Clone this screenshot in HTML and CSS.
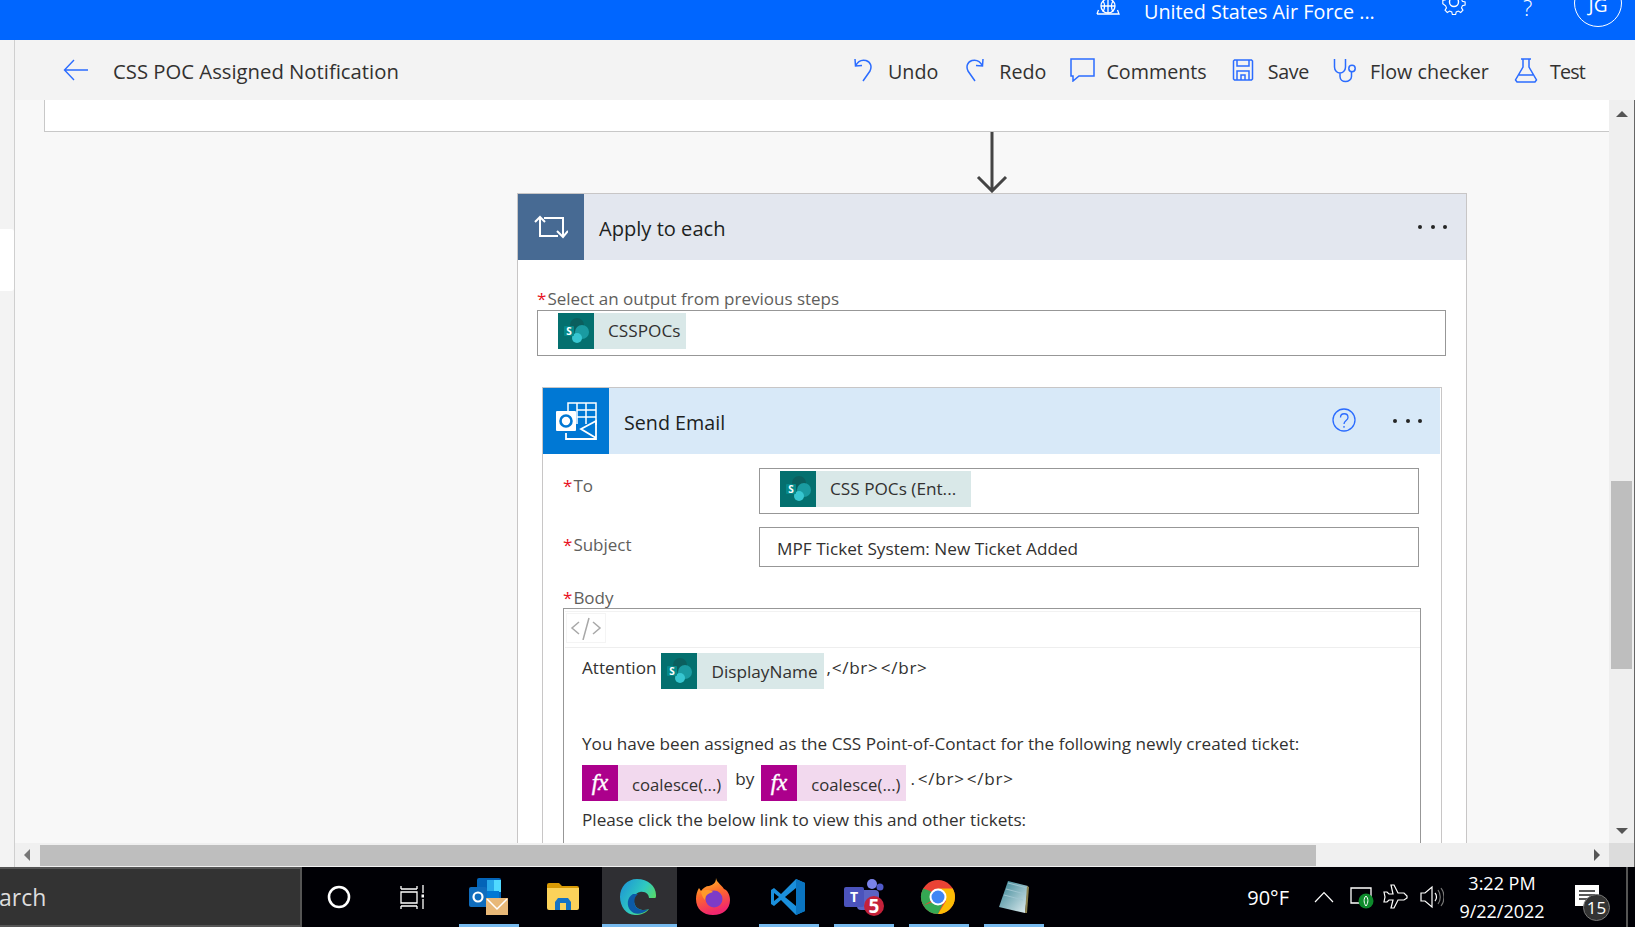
FILE: index.html
```html
<!DOCTYPE html>
<html lang="en">
<head>
<meta charset="utf-8">
<title>CSS POC Assigned Notification</title>
<link rel="stylesheet" href="styles.css">
</head>
<body>
<div class="page">
  <header class="topbar">
    <div class="topbar-inner">
      <svg class="env-ic" width="24" height="24" viewBox="0 0 24 24" fill="none" stroke="#fff" stroke-width="1.3"><circle cx="12" cy="6" r="7"/><path d="M5 6h14M12 -1v14M7 1c2 3 2 7 0 11M17 1c-2 3-2 7 0 11M1 14h22l-1.500-4M1 14l1.500-4"/></svg>
      <span class="env-name">United States Air Force ...</span>
      <svg class="gear" width="26" height="26" viewBox="0 0 26 26" fill="none" stroke="#fff" stroke-width="1.400"><circle cx="13" cy="13" r="4.500"/><path d="M11 1h4l.8 3.400 2.600 1.100 3-1.800 2.800 2.800-1.800 3 1.100 2.600 3.400.8v4l-3.400.8-1.100 2.600 1.800 3-2.800 2.800-3-1.800-2.600 1.100-.8 3.400h-4l-.8-3.400-2.600-1.100-3 1.800-2.800-2.800 1.800-3-1.100-2.600L-1 15v-4l3.400-.8 1.100-2.600-1.800-3 2.800-2.800 3 1.800 2.600-1.100z" transform="translate(2.600 2.600) scale(.8)"/></svg>
      <span class="help">?</span>
      <span class="avatar">JG</span>
    </div>
  </header>

  <div class="workspace">
    <aside class="rail"><div class="rail-tab"></div></aside>
    <main class="main">
      <nav class="toolbar">
        <svg class="back" width="26" height="24" viewBox="0 0 26 24" fill="none" stroke="#2b6cff" stroke-width="1.400"><path d="M25 12H2M11 2 1.500 12 11 22"/></svg>
        <h1 class="flow-title">CSS POC Assigned Notification</h1>
        <div class="actions">
          <button class="action undo"><svg width="20" height="24" viewBox="0 0 20 24" fill="none" stroke="#2b6cff" stroke-width="1.500"><path d="M2 1l.5 7 6.500-.5M2.500 8C5 3 9 1.500 13 2.500c5 1.500 6 6.500 4 10.500L10 23"/></svg><span>Undo</span></button>
          <button class="action redo"><svg width="20" height="24" viewBox="0 0 20 24" fill="none" stroke="#2b6cff" stroke-width="1.500"><path d="M18 1l-.5 7-6.500-.5M17.500 8C15 3 11 1.500 7 2.500 2 4 1 9 3 13l7 10"/></svg><span>Redo</span></button>
          <button class="action comments"><svg width="25" height="24" viewBox="0 0 25 24" fill="none" stroke="#2b6cff" stroke-width="1.500"><path d="M1 1h23v17H9l-6 5v-5H1z"/></svg><span>Comments</span></button>
          <button class="action save"><svg width="22" height="24" viewBox="0 0 22 24" fill="none" stroke="#2b6cff" stroke-width="1.500"><path d="M2.500 2h17l1 1v18l-1 1h-17l-1-1V3zM5 2v6h12V2M5 22v-9h12v9M9 22v-5h4v5"/></svg><span>Save</span></button>
          <button class="action checker"><svg width="24" height="25" viewBox="0 0 24 25" fill="none" stroke="#2b6cff" stroke-width="1.500"><path d="M1.500 1v8c0 4 3 6 5.500 6s5.500-2 5.500-6V1M7 15v3.500c0 3 2.500 5 5.500 5s6-2 6-5V14"/><circle cx="19" cy="10.500" r="3.200"/></svg><span>Flow checker</span></button>
          <button class="action test"><svg width="24" height="25" viewBox="0 0 24 25" fill="none" stroke="#2b6cff" stroke-width="1.500"><path d="M7 1h10M9 1v8L1.500 22l1.500 2h18l1.500-2L15 9V1M5 17h14"/></svg><span>Test</span></button>
        </div>
      </nav>

      <div class="content">
        <section class="canvas">
          <div class="prev-panel"></div>
          <div class="flow-col">
            <svg class="connector" width="32" height="61" viewBox="0 0 32 61" fill="none" stroke="#444" stroke-width="3"><path d="M16 0v58M2 45l14 14 14-14"/></svg>
            <article class="card apply">
              <div class="card-head apply-head">
                <div class="card-icon apply-icon">
                  <svg width="34" height="24" viewBox="0 0 34 24" fill="none" stroke="#fff" stroke-width="2"><path d="M1 7l5-5 5 5M6 2v19h18M10 3h19v18M23 16l6 6 5-6"/></svg>
                </div>
                <span class="card-title">Apply to each</span>
                <span class="dots"><i></i><i></i><i></i></span>
              </div>
              <div class="apply-body">
                <label class="lbl"><b>*</b>Select an output from previous steps</label>
                <div class="inp inp-output">
                  <span class="token tok-sp"><svg class="tok-ic" viewBox="0 0 36 36"><rect width="36" height="36" fill="#04706f"/><circle cx="19" cy="12" r="7" fill="#0b5f5e"/><circle cx="24" cy="19" r="7" fill="#1a9ba1"/><circle cx="19" cy="25" r="5" fill="#37c6d0"/><rect x="6" y="13" width="10" height="10" rx="1" fill="#058a8a"/><text x="11" y="22" class="sp-s">S</text></svg><span class="tok-t t1">CSSPOCs</span></span>
                </div>

                <article class="card send">
                  <div class="card-head send-head">
                    <div class="card-icon send-icon">
                      <svg width="42" height="38" viewBox="0 0 42 38" fill="none" stroke="#fff" stroke-width="1.500"><path d="M13 9V1h28v22M22 1v21M31 1v21M22 8h19M22 15h19"/><rect x="1" y="9" width="20" height="20" rx="1" fill="#fff" stroke="none"/><circle cx="11" cy="19" r="5.500" stroke="#0078d4" stroke-width="2.600"/><path d="M11 31v6h30V19L26 27l15 9" stroke-width="1.800"/></svg>
                    </div>
                    <span class="card-title send-title">Send Email</span>
                    <svg class="q" width="24" height="24" viewBox="0 0 24 24" fill="none" stroke="#2b6cff" stroke-width="1.300"><circle cx="12" cy="12" r="11"/><path d="M8.500 9.500c0-5 7.500-5 7.500 0 0 3-4 3-4 6.500M12 18v1.800"/></svg>
                    <span class="dots"><i></i><i></i><i></i></span>
                  </div>
                  <div class="send-body">
                    <div class="field f-to">
                      <label class="lbl lbl-side"><b>*</b>To</label>
                      <div class="inp inp-to">
                        <span class="token tok-sp"><svg class="tok-ic" viewBox="0 0 36 36"><rect width="36" height="36" fill="#04706f"/><circle cx="19" cy="12" r="7" fill="#0b5f5e"/><circle cx="24" cy="19" r="7" fill="#1a9ba1"/><circle cx="19" cy="25" r="5" fill="#37c6d0"/><rect x="6" y="13" width="10" height="10" rx="1" fill="#058a8a"/><text x="11" y="22" class="sp-s">S</text></svg><span class="tok-t t2">CSS POCs (Ent...</span></span>
                      </div>
                    </div>
                    <div class="field f-subject">
                      <label class="lbl lbl-side"><b>*</b>Subject</label>
                      <div class="inp inp-subject">MPF Ticket System: New Ticket Added</div>
                    </div>
                    <label class="lbl lbl-body"><b>*</b>Body</label>
                    <div class="editor">
                      <div class="editor-bar"><span class="code-btn"><svg width="32" height="24" viewBox="0 0 32 24" fill="none" stroke="#a8a8a8" stroke-width="1.500"><path d="M9 6 2 12l7 6M23 6l7 6-7 6M19 2l-6 22"/></svg></span></div>
                      <div class="editor-text">
                        <div class="line l-attn"><span>Attention</span><span class="token tok-sp tok-dn"><svg class="tok-ic" viewBox="0 0 36 36"><rect width="36" height="36" fill="#04706f"/><circle cx="19" cy="12" r="7" fill="#0b5f5e"/><circle cx="24" cy="19" r="7" fill="#1a9ba1"/><circle cx="19" cy="25" r="5" fill="#37c6d0"/><rect x="6" y="13" width="10" height="10" rx="1" fill="#058a8a"/><text x="11" y="22" class="sp-s">S</text></svg><span class="tok-t t3">DisplayName</span></span><span class="after">,&lt;/br&gt; &lt;/br&gt;</span></div>
                        <div class="line l-you">You have been assigned as the CSS Point-of-Contact for the following newly created ticket:</div>
                        <div class="line l-tok"><span class="token tok-fx"><svg class="tok-ic" viewBox="0 0 36 36"><rect width="36" height="36" fill="#ac008c"/><text x="18" y="25" class="fx-t">fx</text></svg><span class="tok-t t4">coalesce(...)</span></span><span class="by">by</span><span class="token tok-fx"><svg class="tok-ic" viewBox="0 0 36 36"><rect width="36" height="36" fill="#ac008c"/><text x="18" y="25" class="fx-t">fx</text></svg><span class="tok-t t4">coalesce(...)</span></span><span class="after after2">. &lt;/br&gt; &lt;/br&gt;</span></div>
                        <div class="line l-please">Please click the below link to view this and other tickets:</div>
                      </div>
                    </div>
                  </div>
                </article>
              </div>
            </article>
          </div>
        </section>
        <div class="vscroll">
          <span class="arrow-up"></span>
          <div class="v-track"><div class="v-thumb"></div></div>
          <span class="arrow-down"></span>
        </div>
      </div>

      <div class="hscroll">
        <span class="h-btn"><span class="arrow-left"></span></span>
        <div class="h-thumb"></div>
        <div class="h-rest"><span class="arrow-right"></span></div>
        <div class="corner"></div>
      </div>
    </main>
  </div>

  <footer class="taskbar">
    <div class="search"><span class="search-t">arch</span></div>
    <div class="tb-item cortana"><svg width="24" height="24" viewBox="0 0 24 24" fill="none" stroke="#fff" stroke-width="2.600"><circle cx="12" cy="12" r="10"/></svg></div>
    <div class="tb-item task-view"><svg width="26" height="24" viewBox="0 0 26 24" fill="none" stroke="#fff" stroke-width="1.300"><path d="M3 4V1M19 4V1M3 4h16M3 7h16v11H3zM3 21h16M3 21v3M19 21v3M25 0v8M25 14v10"/><rect x="23.500" y="9.500" width="3" height="3" fill="#fff" stroke="none"/></svg></div>
    <div class="tb-item running">
      <svg width="40" height="40" viewBox="0 0 40 40"><rect x="9" y="1" width="24" height="28" rx="2" fill="#0364b8"/><rect x="19" y="3" width="14" height="12" fill="#28a8ea"/><rect x="26" y="3" width="7" height="12" fill="#50d9ff"/><rect x="9" y="14" width="22" height="16" fill="#0078d4"/><rect x="1" y="10" width="18" height="20" rx="2" fill="#0f6cbd"/><circle cx="10" cy="20" r="4.500" fill="none" stroke="#fff" stroke-width="2.200"/><rect x="18" y="21" width="22" height="17" fill="#e8b878"/><path d="M19 22l10 10 10-10" fill="none" stroke="#fff" stroke-width="1.500"/></svg>
    </div>
    <div class="tb-item">
      <svg width="34" height="30" viewBox="0 0 34 30"><path d="M1 3q0-2 2-2h10l3 3h15q2 0 2 2v5H1z" fill="#d99a05"/><path d="M1 6h32v20q0 2-2 2H3q-2 0-2-2z" fill="#fbd25a"/><path d="M9 28v-8l3-4h10l3 4v8h-5v-7h-6v7z" fill="#1473c5"/></svg>
    </div>
    <div class="tb-item active">
      <svg width="38" height="38" viewBox="0 0 38 38"><defs><linearGradient id="eg" x1="0" y1="0" x2="1" y2=".6"><stop offset="0" stop-color="#1b8fd8"/><stop offset=".6" stop-color="#2fc9c0"/><stop offset="1" stop-color="#5fdc5a"/></linearGradient></defs><path d="M18 1C8 1 1 9 1 19c0 9 6 18 15 18 6 0 11-2 14-6-5 2-12 1-14-4-3-6 0-12 5-13 6-1 9 3 9 6h6c1 0 1-2 1-3C37 8 29 1 18 1z" fill="url(#eg)"/><path d="M14 16c-6 3-7 12-2 17 3 3 9 5 18-2-5 2-12 1-14-4-1-4-1-8 3-11z" fill="#0c5aa8"/></svg>
    </div>
    <div class="tb-item">
      <svg width="36" height="38" viewBox="0 0 36 38"><defs><linearGradient id="ff" x1="0" y1="0" x2=".3" y2="1"><stop offset="0" stop-color="#ffcb2b"/><stop offset=".5" stop-color="#ff6a2b"/><stop offset="1" stop-color="#f0266e"/></linearGradient></defs><path d="M21 0c1 5 5 6 8 11 3 1 6 5 6 11 0 9-7 15-17 15S1 31 1 21c0-4 1-8 3-11l2 3c2-3 5-5 8-5 4-1 7-3 7-8z" fill="url(#ff)"/><circle cx="19" cy="21" r="8.500" fill="#7d3bc7"/><path d="M6 13c3-1 9-2 12 1-4 1-8 3-8 8-2-2-4-6-4-9z" fill="#ff9a2b"/></svg>
    </div>
    <div class="tb-item running">
      <svg width="36" height="38" viewBox="0 0 36 38"><path d="M26 1l9 4v28l-9 4L11 22l-7 6-3-2V12l3-2 7 6z" fill="#1a8fdc"/><path d="M26 1l9 4v28l-9 4z" fill="#0a74c0"/><path d="M26 10L15 19l11 9z" fill="#000"/><path d="M4 15l5 4-5 4z" fill="#000"/></svg>
    </div>
    <div class="tb-item running teams">
      <svg width="42" height="40" viewBox="0 0 42 40"><circle cx="29" cy="7" r="5" fill="#7b83eb"/><circle cx="37" cy="10" r="3.500" fill="#5059c9"/><rect x="14" y="13" width="22" height="20" rx="4" fill="#5b63c4"/><rect x="1" y="10" width="20" height="20" rx="2" fill="#4b53bc"/><text x="11" y="25" class="t-t">T</text><circle cx="31" cy="29" r="10" fill="#c4213a"/><text x="31" y="36" class="t-5">5</text></svg>
    </div>
    <div class="tb-item running">
      <svg width="36" height="36" viewBox="0 0 36 36"><circle cx="18" cy="18" r="17" fill="#ea4335"/><path d="M18 18L3.300 26.500A17 17 0 0 1 3.300 9.500L10 12z" fill="#34a853"/><path d="M3.300 26.500A17 17 0 0 0 18 35L26 18z" fill="#34a853"/><path d="M18 9.500h14.700A17 17 0 0 1 18 35L26 22z" fill="#fbbc05"/><circle cx="18" cy="18" r="8.500" fill="#fff"/><circle cx="18" cy="18" r="6.500" fill="#3f86f4"/></svg>
    </div>
    <div class="tb-item running">
      <svg width="34" height="34" viewBox="0 0 34 34"><defs><linearGradient id="np" x1="0" y1="0" x2="1" y2="1"><stop offset="0" stop-color="#2f7f90"/><stop offset="1" stop-color="#e3eff2"/></linearGradient></defs><path d="M12 1l20 5-3 27L3 27z" fill="url(#np)"/><path d="M12 3l19 5M10 9l19 5M8 15l19 5" stroke="#9fc5d0" stroke-width="1"/><path d="M31 6l2 1-2 26h-2z" fill="#8c8350"/></svg>
    </div>

    <div class="tray">
      <span class="temp">90°F</span>
      <svg class="t-caret" width="20" height="12" viewBox="0 0 20 12" fill="none" stroke="#fff" stroke-width="1.200"><path d="M1 11l9-9.500L19 11"/></svg>
      <svg class="t-batt" width="24" height="24" viewBox="0 0 24 24"><path d="M1 3h20v15H1z" fill="none" stroke="#fff" stroke-width="1.300"/><circle cx="16" cy="16" r="7.500" fill="#0d8a2c"/><path d="M16 11c2.500 2 2.500 7 0 10-2.500-3-2.500-8 0-10z" fill="none" stroke="#fff"/></svg>
      <svg class="t-plane" width="26" height="26" viewBox="0 0 26 26" fill="none" stroke="#fff" stroke-width="1.200"><path d="M8 1h3l4 8h6l3 3v2l-3 2h-6l-4 8H8l2-8H6l-2 2H1l1-5-1-5h3l2 2h4z"/></svg>
      <svg class="t-vol" width="24" height="24" viewBox="0 0 24 24" fill="none" stroke="#fff" stroke-width="1.200"><path d="M1 8h4l7-6v20l-7-6H1zM15 8c2 2 2 6 0 8"/><path d="M18 5c3 4 3 10 0 14M21 3c4 5 4 13 0 18" stroke="#777"/></svg>
      <div class="clock"><span>3:22 PM</span><span>9/22/2022</span></div>
      <div class="notif">
        <svg width="24" height="21" viewBox="0 0 24 21"><path d="M0 0h24v21H0z" fill="#fff"/><path d="M4 6h16M4 10h16M4 14h12" stroke="#222" stroke-width="1.300"/></svg>
        <span class="badge">15</span>
      </div>
      <div class="show-desktop"></div>
    </div>
  </footer>
</div>
</body>
</html>
```

FILE: styles.css
```css
* { box-sizing: border-box; }
html, body { margin: 0; padding: 0; }
body { font-family: "Open Sans", "Noto Sans", sans-serif; color: #323130; overflow: hidden; }
.sp-s { font: 700 10px "Open Sans", sans-serif; fill: #fff; text-anchor: middle; }
.fx-t { font: italic 400 23px "Liberation Serif", serif; fill: #fff; stroke: #fff; stroke-width: .4px; text-anchor: middle; }
.t-t { font: 700 14px "Open Sans", sans-serif; fill: #fff; text-anchor: middle; }
.t-5 { font: 700 19px "Open Sans", sans-serif; fill: #fff; text-anchor: middle; }

.page { width: 1635px; height: 927px; display: flex; flex-direction: column; overflow: hidden; }

/* top bar */
.topbar { height: 40px; flex: none; background: #0066ff; overflow: hidden; color: #fff; }
.topbar-inner { height: 48px; margin-top: -12px; display: flex; align-items: center; padding-left: 1096px; }
.env-ic { flex: none; margin-top: -1px; }
.env-name { margin-left: 24px; font-size: 19.800px; width: 296px; white-space: nowrap; margin-top: -2px; }
.gear { flex: none; margin-top: -21px; margin-left: 1px; }
.help { margin-left: 56px; font-size: 22px; font-weight: 300; width: 51px; margin-top: -10px; }
.avatar { width: 48px; height: 48px; border: 1px solid #fff; border-radius: 50%; display: flex; align-items: center; justify-content: center; font-size: 19px; flex: none; margin-top: -18px; margin-left: 0; padding-top: 4px; }

/* workspace */
.workspace { flex: 1; display: flex; min-height: 0; }
.rail { width: 15px; flex: none; background: #f3f3f3; border-right: 1px solid #cfcfcf; padding-top: 189px; }
.rail-tab { height: 62px; background: #fff; border-radius: 0 3px 3px 0; }
.main { flex: 1; min-width: 0; display: flex; flex-direction: column; }

/* toolbar */
.toolbar { height: 60px; flex: none; background: #f3f3f3; display: flex; align-items: center; padding: 2px 0 0 48px; }
.back { flex: none; margin-top: -2px; }
.flow-title { margin: 0 0 0 24px; font-size: 20.300px; font-weight: 400; color: #323130; white-space: nowrap; }
.actions { margin-left: auto; display: flex; align-items: center; padding-right: 50px; }
.action { display: flex; align-items: center; background: none; border: 0; padding: 0; font: inherit; font-size: 19.700px; color: #323130; white-space: nowrap; }
.action svg { flex: none; margin-top: -2px; }
.action span { margin-left: 15px; }
.redo { margin-left: 27px; }
.redo span { margin-left: 14px; }
.comments { margin-left: 24px; }
.comments span { margin-left: 11px; }
.save { margin-left: 25px; }
.save span { margin-left: 14px; letter-spacing: -.3px; }
.checker { margin-left: 24px; }
.checker span { margin-left: 13px; }
.test { margin-left: 25px; }
.test span { margin-left: 12px; letter-spacing: -.8px; }

/* canvas */
.content { flex: 1; display: flex; min-height: 0; }
.canvas { flex: 1; min-width: 0; background: #f8f8f8; overflow: hidden; padding-left: 29px; }
.prev-panel { height: 32px; background: #fff; border-left: 1px solid #c8c8c8; border-bottom: 1px solid #c8c8c8; }
.flow-col { width: 950px; margin-left: 473px; display: flex; flex-direction: column; align-items: center; }
.connector { flex: none; display: block; }

.card { background: #fff; border: 1px solid #c8c6c6; }
.apply { width: 950px; }
.card-head { height: 66px; display: flex; align-items: center; }
.apply-head { background: #e3e7ef; }
.send-head { background: #d8e9f8; margin-right: 1px; }
.card-icon { width: 66px; height: 66px; flex: none; display: flex; align-items: center; justify-content: center; }
.apply-icon { background: #476a93; }
.send-icon { background: #0078d4; }
.card-title { margin-left: 15px; font-size: 20.100px; color: #201f1e; padding-top: 2px; }
.send-title { font-size: 19.700px; }
.dots { margin-left: auto; display: flex; gap: 8.500px; padding-right: 19px; }
.dots i { width: 4px; height: 4px; background: #252525; border-radius: 50%; display: block; }
.q { margin-left: auto; flex: none; margin-right: 37px; margin-top: -3px; }
.q + .dots { margin-left: 0; padding-right: 18px; margin-top: -1px; }
.apply-head .dots { margin-top: 0; }

.apply-body { padding: 29px 0 0 19px; }
.lbl { display: block; height: 20px; line-height: 20px; font-size: 17px; color: #605e5c; white-space: nowrap; }
.lbl b { color: #e81123; font-weight: 400; margin-right: 1px; }
.inp { border: 1.500px solid #979797; background: #fff; display: flex; align-items: center; }
.inp-output { width: 909px; height: 46px; margin-top: 1px; padding: 1.500px 0 0 20px; align-items: flex-start; }
.token { display: inline-flex; align-items: center; height: 36px; flex: none; }
.tok-sp { background: #d9e8e8; }
.tok-fx { background: #f2d9ee; }
.tok-ic { width: 36px; height: 36px; flex: none; display: block; }
.tok-t { font-size: 17.200px; color: #323130; white-space: nowrap; margin-left: 14px; }
.t1 { margin-right: 6px; }
.t2 { margin-right: 15px; }
.t3 { margin-right: 6px; margin-top: 2px; }
.t4 { margin-right: 6px; margin-top: 2px; font-size: 16.700px; }

.send { width: 900px; margin: 31px 0 0 5px; }
.send-body { padding: 14px 0 0 20px; }
.field { display: flex; }
.lbl-side { width: 196px; flex: none; margin-top: 8px; }
.f-to .inp-to { width: 660px; height: 46px; padding: 1.500px 0 0 20px; align-items: flex-start; }
.f-subject { margin-top: 13px; }
.f-subject .lbl-side { margin-top: 8px; }
.inp-subject { width: 660px; height: 40px; padding: 2px 0 0 17px; font-size: 17.200px; color: #323130; white-space: nowrap; }
.lbl-body { margin-top: 21px; }
.editor { width: 858px; height: 300px; border: 1.500px solid #979797; border-bottom: 0; }
.editor-bar { height: 37px; margin: 2px 0 0 1px; border-bottom: 1px solid #eee; border-top: 1px solid #f2f2f2; padding-left: 1px; }
.code-btn { display: flex; width: 40px; height: 30px; align-items: center; justify-content: center; border: 1px solid #f4f4f4; margin-top: 1px; }
.editor-text { padding: 5px 0 0 18px; font-size: 17.150px; color: #323130; }
.line { display: flex; white-space: nowrap; }
.l-attn { height: 36px; align-items: flex-start; line-height: 30px; }
.tok-dn { margin-left: 5px; }
.after { margin-left: 3px; letter-spacing: .7px; word-spacing: -3px; }
.l-you { margin-top: 42px; height: 26px; line-height: 26px; }
.l-tok { margin-top: 8px; height: 36px; align-items: center; }
.by { margin: -10px 7px 0 8px; }
.after2 { margin: -10px 0 0 4px; }
.l-please { margin-top: 6px; line-height: 26px; }

/* scrollbars */
.vscroll { width: 26px; flex: none; background: #efefef; border-right: 1px solid #666; display: flex; flex-direction: column; align-items: center; padding: 11px 0 9px; }
.arrow-up { width: 0; height: 0; border: 6px solid transparent; border-top: 0; border-bottom: 6px solid #555; flex: none; }
.v-track { flex: 1; width: 100%; padding: 364px 2px 0 2px; }
.v-thumb { height: 188px; width: 21px; background: #bebebe; }
.arrow-down { width: 0; height: 0; border: 6px solid transparent; border-bottom: 0; border-top: 6px solid #555; flex: none; }
.hscroll { height: 24px; flex: none; background: #f0f0f0; display: flex; }
.h-btn { width: 25px; flex: none; display: flex; align-items: center; justify-content: center; padding-right: 1px; }
.arrow-left { width: 0; height: 0; border: 6px solid transparent; border-left: 0; border-right: 6px solid #777; }
.h-thumb { width: 1276px; margin: 2px 0 1px; background: #bebebe; flex: none; }
.h-rest { flex: 1; display: flex; align-items: center; justify-content: flex-end; padding-right: 9px; }
.arrow-right { width: 0; height: 0; border: 6px solid transparent; border-right: 0; border-left: 6px solid #555; }
.corner { width: 26px; flex: none; background: #dcdcdc; border-right: 1px solid #666; }

/* taskbar */
.taskbar { height: 60px; flex: none; background: #000005; display: flex; align-items: stretch; color: #fff; }
.search { width: 302px; flex: none; background: #333; border: solid #555; border-width: 2px 2px 2px 0; display: flex; align-items: center; padding-top: 1px; }
.search-t { font-size: 23px; color: #ddd; line-height: 1; margin-left: -1px; }
.tb-item { width: 75px; flex: none; display: flex; align-items: center; justify-content: center; position: relative; padding-right: 4px; }
.cortana { padding-right: 2px; }
.task-view { padding-right: 8px; }
.teams { padding-right: 2px; }
.tb-item.active { background: #2f2f33; }
.running::after, .active::after { content: ""; position: absolute; left: 7px; right: 8px; bottom: 0; height: 3px; background: #76b9ed; }
.active::after { left: 0; right: 0; }
.tray { margin-left: auto; display: flex; align-items: center; height: 100%; }
.temp { font-size: 20px; margin-right: 25px; }
.t-caret { flex: none; margin-right: 16px; }
.t-batt { flex: none; margin-right: 9px; }
.t-plane { flex: none; margin-right: 11px; }
.t-vol { flex: none; margin-right: 2px; }
.clock { width: 112px; display: flex; flex-direction: column; align-items: center; gap: 3px; font-size: 18px; line-height: 25px; margin-right: 17px; }
.notif { position: relative; width: 36px; height: 36px; flex: none; margin-right: 15px; margin-top: 12px; }
.notif svg { display: block; }
.badge { position: absolute; left: 8px; top: 9px; width: 27px; height: 27px; border-radius: 50%; background: #333; border: 1px solid #777; font-size: 17px; display: flex; align-items: center; justify-content: center; }
.show-desktop { width: 2px; height: 100%; background: #555; margin-right: 7px; }
```
